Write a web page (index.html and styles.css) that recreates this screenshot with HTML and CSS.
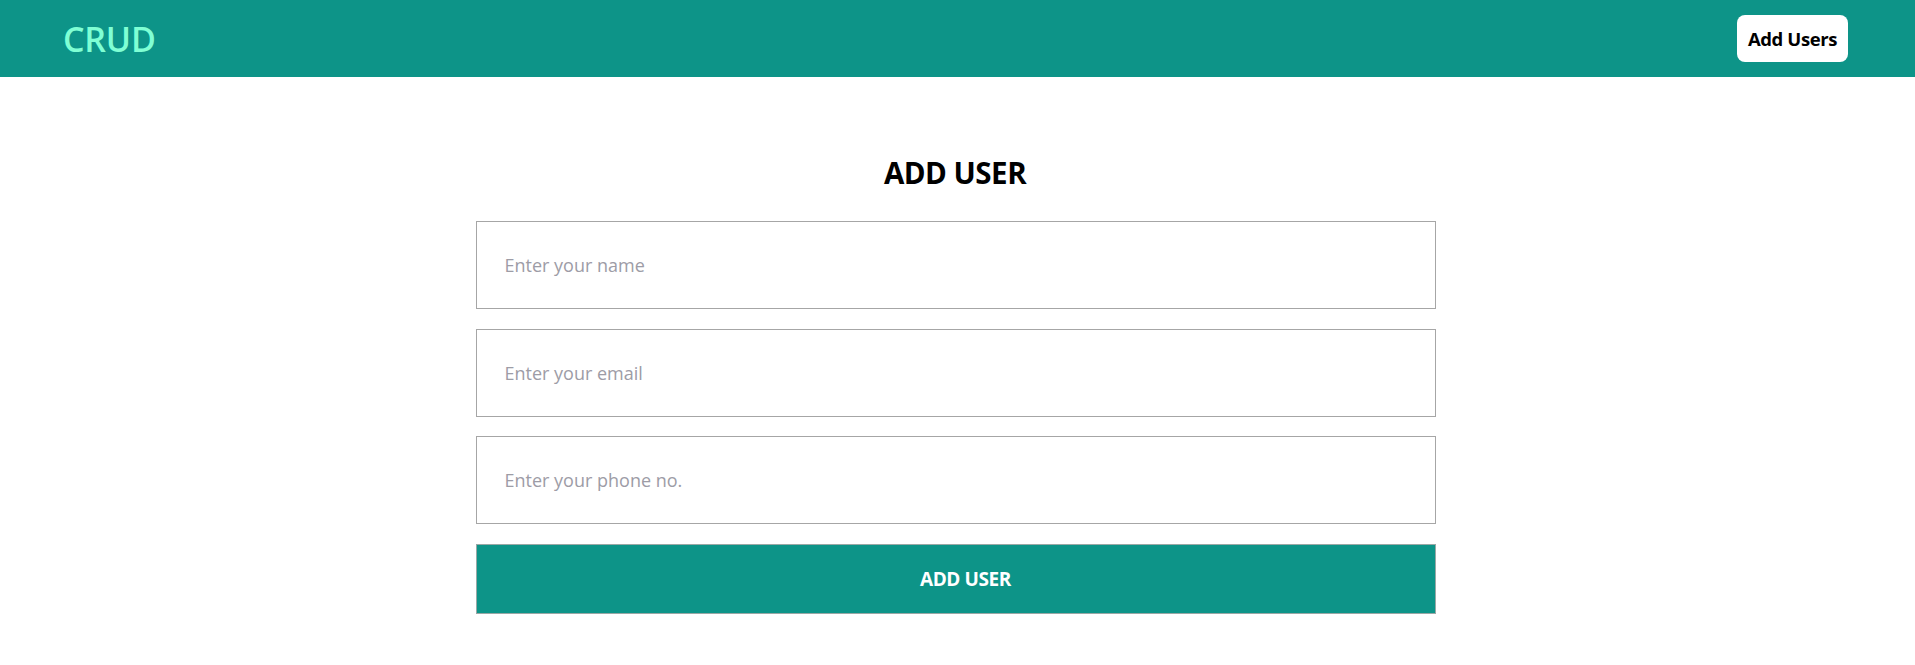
FILE: index.html
```html
<!DOCTYPE html>
<html lang="en">
<head>
<meta charset="utf-8">
<title>CRUD</title>
<link rel="stylesheet" href="styles.css">
</head>
<body>
<header class="navbar">
  <div class="brand">CRUD</div>
  <button class="nav-btn">Add Users</button>
</header>
<main class="page">
  <h2 class="title">ADD USER</h2>
  <form class="user-form">
    <input class="field" type="text" placeholder="Enter your name">
    <input class="field" type="email" placeholder="Enter your email">
    <input class="field" type="text" placeholder="Enter your phone no.">
    <button class="submit" type="button">ADD USER</button>
  </form>
</main>
</body>
</html>
```

FILE: styles.css
```css
* { box-sizing: border-box; }
body {
  margin: 0;
  font-family: "Open Sans", "Noto Sans", sans-serif;
  background: #fff;
}
.navbar {
  height: 77px;
  background: #0d9488;
  display: flex;
  align-items: center;
  justify-content: space-between;
  padding: 0 67px 0 63px;
}
.brand {
  color: #7fffd4;
  font-size: 34px;
  font-weight: 600;
  letter-spacing: -0.2px;
  line-height: 40px;
}
.nav-btn {
  width: 111px;
  height: 47px;
  background: #fff;
  border: none;
  border-radius: 8px;
  font-family: inherit;
  font-size: 18.5px;
  font-weight: 700;
  color: #000;
  padding: 0;
  letter-spacing: -0.4px;
}
.page {
  padding-top: 78px;
}
.title {
  margin: 0 0 30px;
  padding-right: 5px;
  text-align: center;
  font-size: 29.5px;
  line-height: 36px;
  font-weight: 700;
  color: #000;
  letter-spacing: -0.5px;
}
.user-form {
  width: 960px;
  margin-left: calc(50% - 482px);
  display: flex;
  flex-direction: column;
  gap: 19.5px;
}
.field {
  height: 88px;
  border: 1px solid #a6a6a6;
  padding: 0 28px;
  font-family: inherit;
  font-size: 18px;
  color: #333;
  outline: none;
}
.field::placeholder {
  color: #9d9ca6;
}
.submit {
  height: 70px;
  background: #0d9488;
  border: 1px solid #9aa8a6;
  padding: 0 0 0 20px;
  color: #fff;
  font-family: inherit;
  font-size: 19px;
  font-weight: 700;
  letter-spacing: -0.4px;
}
```
